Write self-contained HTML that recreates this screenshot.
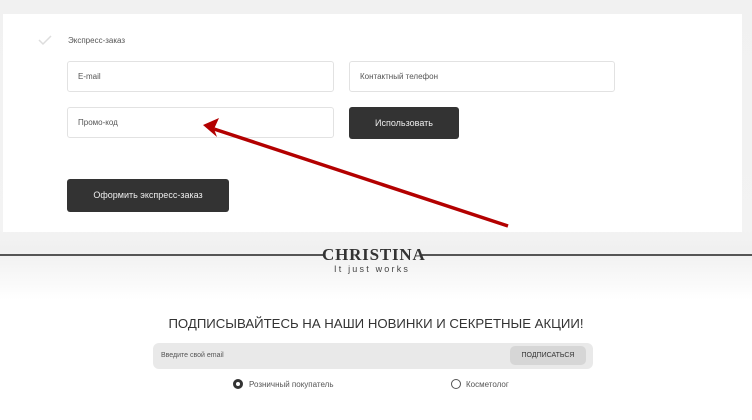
<!DOCTYPE html>
<html><head><meta charset="utf-8"><style>
*{margin:0;padding:0;box-sizing:border-box}
body{width:752px;height:420px;overflow:hidden;position:relative;font-family:"Liberation Sans",sans-serif;background:linear-gradient(#f1f1f1 0,#f3f3f3 230px,#f0f0f0 250px,#fff 300px,#fff 420px)}
.card{position:absolute;left:3px;top:14px;width:739px;height:218px;background:#fff}
.inp{position:absolute;height:31px;border:1px solid #e2e2e2;border-radius:3px;background:#fff;font-size:8px;color:#555;padding-left:10px;line-height:29px}
.btn{position:absolute;background:#333;color:#eee;border-radius:3px;font-size:9px;text-align:center}
.t{position:absolute;white-space:nowrap}
</style></head><body>
<div class="card"></div>
<svg class="t" style="left:38px;top:34px" width="14" height="12"><path d="M1 6 L5 10 L13 2" stroke="#ddd" stroke-width="1.5" fill="none"/></svg>
<div class="t" style="left:68px;top:36px;font-size:8px;color:#555">Экспресс-заказ</div>
<div class="inp" style="left:67px;top:61px;width:267px">E-mail</div>
<div class="inp" style="left:349px;top:61px;width:266px">Контактный телефон</div>
<div class="inp" style="left:67px;top:107px;width:267px">Промо-код</div>
<div class="btn" style="left:349px;top:107px;width:110px;height:32px;line-height:32px">Использовать</div>
<div class="btn" style="left:67px;top:179px;width:162px;height:33px;line-height:33px">Оформить экспресс-заказ</div>
<svg class="t" style="left:0;top:0" width="752" height="420"><line x1="508" y1="226" x2="214" y2="129" stroke="#b30000" stroke-width="3.5"/><path d="M203 125 L219 118 L214 129 L217 137 Z" fill="#b30000"/></svg>
<div class="t" style="left:0;top:254px;width:324px;height:1.5px;background:#555"></div>
<div class="t" style="left:422px;top:254px;width:330px;height:1.5px;background:#555"></div>
<div class="t" style="left:322px;top:245px;font-family:'Liberation Serif',serif;font-weight:bold;font-size:17px;color:#333;letter-spacing:0.8px">CHRISTINA</div>
<div class="t" style="left:334px;top:264px;font-size:9px;color:#444;letter-spacing:2.2px">It just works</div>
<div class="t" style="left:0;width:752px;text-align:center;top:316px;font-size:13.2px;color:#333;letter-spacing:0">ПОДПИСЫВАЙТЕСЬ НА НАШИ НОВИНКИ И СЕКРЕТНЫЕ АКЦИИ!</div>
<div class="t" style="left:153px;top:343px;width:440px;height:26px;background:#e9e9e9;border-radius:6px"></div>
<div class="t" style="left:161px;top:352px;font-size:7px;color:#555">Введите свой email</div>
<div class="t" style="left:510px;top:346px;width:76px;height:19px;background:#d6d6d6;border-radius:5px;font-size:7px;color:#333;text-align:center;line-height:19px">ПОДПИСАТЬСЯ</div>
<div class="t" style="left:233px;top:379px;width:10px;height:10px;border:3px solid #333;border-radius:50%"></div>
<div class="t" style="left:249px;top:380px;font-size:8px;color:#555">Розничный покупатель</div>
<div class="t" style="left:451px;top:379px;width:10px;height:10px;border:1px solid #555;border-radius:50%"></div>
<div class="t" style="left:466px;top:380px;font-size:8px;color:#555">Косметолог</div>
</body></html>
